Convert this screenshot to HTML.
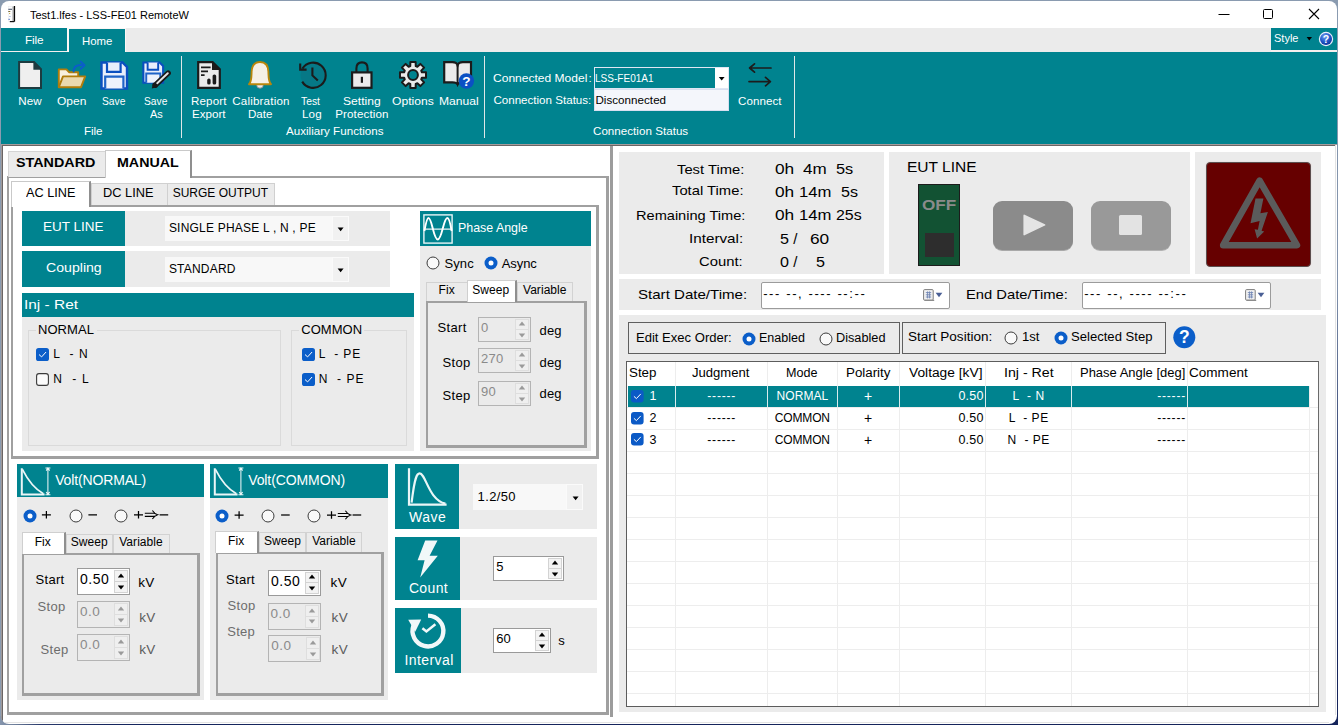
<!DOCTYPE html>
<html><head><meta charset="utf-8"><title>LSS-FE01 RemoteW</title><style>
html,body{margin:0;padding:0}
body{width:1338px;height:725px;position:relative;overflow:hidden;font-family:"Liberation Sans",sans-serif;font-size:12px;
background:linear-gradient(90deg,#7d8fa6 0,#6e8098 12%,#24356b 30%,#14245c 100%)}
.a{position:absolute;box-sizing:border-box}
.t{position:absolute;white-space:pre;line-height:1;font-family:"Liberation Sans",sans-serif}
#win{position:absolute;left:1px;top:1px;width:1336px;height:722px;background:#fff;border-radius:8px;overflow:hidden}
</style></head>
<body>
<div class="a" style="left:0;top:0;width:1338px;height:725px;background:#8a9bb0"></div>
<div class="a" style="left:0;top:716px;width:1338px;height:9px;background:linear-gradient(90deg,#8696ad 0,#6b7c98 1.2%,#2a3a6c 3%,#16265e 8%,#14235a 100%)"></div>
<div class="a" style="left:1330px;top:0;width:8px;height:725px;background:linear-gradient(180deg,#8a9bb0 0,#7f90aa 40%,#1c2c63 70%,#14235a 100%)"></div>
<div class="a" style="left:1px;top:1px;width:1336px;height:722.5px;border-radius:8px;background:#fff;overflow:hidden"><div class="a" style="left:-1px;top:-1px;width:1338px;height:725px">
<svg class="a" style="left:8px;top:6px;" width="8" height="17" viewBox="0 0 8 17"><rect x="0.2" y="0.3" width="4.4" height="15.4" fill="#fdfdfd" stroke="#e4e6ea" stroke-width="0.5"/><rect x="4.3" y="0.5" width="1.6" height="15" fill="#b9b9b9"/><rect x="5.8" y="0" width="1.3" height="15.7" fill="#050505"/><rect x="1.8" y="15" width="4.4" height="1.2" fill="#111"/><rect x="0.3" y="2.8" width="3.7" height="0.9" fill="#2b3a55"/><rect x="0.3" y="5" width="2" height="0.9" fill="#6b5a20"/><rect x="1" y="7" width="1.2" height="0.9" fill="#c9a93a"/><rect x="1" y="10" width="1.8" height="0.9" fill="#b5c3e4"/><rect x="0.3" y="12.8" width="1.7" height="1" fill="#5f7fc8"/></svg>
<div class="t" style="top:9.48px;font-size:11.6px;color:#000;left:30.43px;transform:scaleX(0.9486);transform-origin:0 0;">Test1.lfes - LSS-FE01 RemoteW</div>
<svg class="a" style="left:1212px;top:4px;" width="120" height="22" viewBox="0 0 120 22"><path d="M6.5 10.5H17.5" stroke="#000" stroke-width="1"/><rect x="51.5" y="5.5" width="9" height="9" rx="1" fill="none" stroke="#000" stroke-width="1"/><path d="M97 5L107 15M107 5L97 15" stroke="#000" stroke-width="1.1"/></svg>
<div class="a" style="left:1px;top:28px;width:1336px;height:24px;background:#ebebeb;"></div>
<div class="a" style="left:1px;top:28px;width:66px;height:23.2px;background:#00838f;"></div>
<div class="a" style="left:1px;top:51.2px;width:68px;height:1.0px;background:#f4efef;"></div>
<div class="a" style="left:67px;top:28px;width:59px;height:24.2px;background:#fbf7f5;"></div>
<div class="a" style="left:69px;top:29.2px;width:56px;height:23.0px;background:#00838f;"></div>
<div class="t" style="top:35.01px;font-size:11.8px;color:#fff;letter-spacing:-0.17px;left:25.0px;">File</div>
<div class="t" style="top:36.01px;font-size:11.8px;color:#fff;left:81.92px;transform:scaleX(0.9660);transform-origin:0 0;">Home</div>
<div class="a" style="left:1271px;top:28px;width:66px;height:21.9px;background:#00838f;"></div>
<div class="a" style="left:1271px;top:49.9px;width:66px;height:2.1px;background:#f6efee;"></div>
<div class="t" style="top:33.41px;font-size:11.8px;color:#fff;left:1273.94px;transform:scaleX(0.9340);transform-origin:0 0;">Style</div>
<svg class="a" style="left:1306px;top:36px;" width="7" height="6" viewBox="0 0 7 6"><path d="M0.6 1H6L3.3 4.6Z" fill="#000"/></svg>
<svg class="a" style="left:1318px;top:31px;" width="16" height="16" viewBox="0 0 16 16"><defs><radialGradient id="hg" cx="0.4" cy="0.3" r="0.8"><stop offset="0" stop-color="#6d9cf0"/><stop offset="0.55" stop-color="#1f55c8"/><stop offset="1" stop-color="#0a2a8a"/></radialGradient></defs><circle cx="8" cy="8" r="7.2" fill="#e8eefc"/><circle cx="8" cy="8" r="6" fill="url(#hg)"/><text x="8" y="12" text-anchor="middle" font-family="Liberation Sans" font-weight="700" font-size="10.5" fill="#fff">?</text></svg>
<div class="a" style="left:1px;top:52px;width:1336px;height:92px;background:#00838f;"></div>
<div class="a" style="left:1px;top:144px;width:1336px;height:1px;background:#a59c9c;"></div>
<div class="a" style="left:2px;top:145px;width:1334px;height:1px;background:#6a6565;"></div>
<div class="a" style="left:181.2px;top:56.2px;width:1.0px;height:81.6px;background:#dfe7e8;"></div>
<div class="a" style="left:484.2px;top:56.2px;width:1.0px;height:81.6px;background:#dfe7e8;"></div>
<div class="a" style="left:794.2px;top:56.2px;width:1.0px;height:81.6px;background:#dfe7e8;"></div>
<div class="t" style="top:95.18px;font-size:11.6px;color:#fff;letter-spacing:0.1px;left:18.2px;">New</div>
<div class="t" style="top:95.18px;font-size:11.6px;color:#fff;left:57.18px;transform:scaleX(1.0362);transform-origin:0 0;">Open</div>
<div class="t" style="top:95.18px;font-size:11.6px;color:#fff;left:102.07px;transform:scaleX(0.8851);transform-origin:0 0;">Save</div>
<div class="t" style="top:95.18px;font-size:11.6px;color:#fff;left:144.07px;transform:scaleX(0.8851);transform-origin:0 0;">Save</div>
<div class="t" style="top:107.98px;font-size:11.6px;color:#fff;left:149.63px;transform:scaleX(0.9455);transform-origin:0 0;">As</div>
<div class="t" style="top:125.38px;font-size:11.6px;color:#fff;letter-spacing:-0.129px;left:84.1px;">File</div>
<div class="t" style="top:95.18px;font-size:11.6px;color:#fff;letter-spacing:0.098px;left:191.1px;">Report</div>
<div class="t" style="top:107.98px;font-size:11.6px;color:#fff;letter-spacing:-0.005px;left:192.1px;">Export</div>
<div class="t" style="top:95.18px;font-size:11.6px;color:#fff;letter-spacing:0.186px;left:232.2px;">Calibration</div>
<div class="t" style="top:107.98px;font-size:11.6px;color:#fff;letter-spacing:-0.033px;left:248.0px;">Date</div>
<div class="t" style="top:95.18px;font-size:11.6px;color:#fff;left:301.46px;transform:scaleX(0.8917);transform-origin:0 0;">Test</div>
<div class="t" style="top:107.98px;font-size:11.6px;color:#fff;letter-spacing:0.076px;left:302.1px;">Log</div>
<div class="t" style="top:95.18px;font-size:11.6px;color:#fff;left:342.77px;transform:scaleX(1.0440);transform-origin:0 0;">Setting</div>
<div class="t" style="top:107.98px;font-size:11.6px;color:#fff;letter-spacing:0.131px;left:335.2px;">Protection</div>
<div class="t" style="top:95.18px;font-size:11.6px;color:#fff;left:392.07px;transform:scaleX(1.0457);transform-origin:0 0;">Options</div>
<div class="t" style="top:95.18px;font-size:11.6px;color:#fff;left:438.97px;transform:scaleX(1.0437);transform-origin:0 0;">Manual</div>
<div class="t" style="top:125.38px;font-size:11.6px;color:#fff;letter-spacing:0.009px;left:286.0px;">Auxiliary Functions</div>
<div class="t" style="top:72.38px;font-size:11.6px;color:#fff;left:493.38px;transform:scaleX(1.0384);transform-origin:0 0;">Connected Model</div>
<div class="t" style="top:94.18px;font-size:11.6px;color:#fff;letter-spacing:-0.003px;left:493.4px;">Connection Status:</div>
<div class="t" style="top:125.38px;font-size:11.6px;color:#fff;letter-spacing:0.026px;left:593.0px;">Connection Status</div>
<div class="t" style="top:95.08px;font-size:11.6px;color:#fff;letter-spacing:0.067px;left:738.0px;">Connect</div>
<div class="t" style="top:72.38px;font-size:11.6px;color:#fff;left:588.6px;">:</div>
<div class="a" style="left:593.5px;top:66.8px;width:135.5px;height:22.6px;background:#dfe6f3;"></div>
<div class="a" style="left:595px;top:68.2px;width:120px;height:19.8px;background:#00838f;"></div>
<div class="a" style="left:715px;top:68.2px;width:12.6px;height:19.8px;background:#fff;"></div>
<svg class="a" style="left:717.5px;top:75.5px;" width="8" height="6" viewBox="0 0 8 6"><path d="M0.8 1H6.6L3.7 4.6Z" fill="#000"/></svg>
<div class="t" style="top:72.38px;font-size:11.6px;color:#fff;left:595.48px;transform:scaleX(0.8656);transform-origin:0 0;">LSS-FE01A1</div>
<div class="a" style="left:593.5px;top:89.4px;width:135.5px;height:21.4px;background:#d7dff0;"></div>
<div class="a" style="left:594.5px;top:90.4px;width:133.5px;height:19.4px;background:#f4f6fb;"></div>
<div class="t" style="top:94.18px;font-size:11.6px;color:#000;letter-spacing:0.039px;left:595.4px;">Disconnected</div>
<svg class="a" style="left:746px;top:62px;" width="28" height="26" viewBox="0 0 28 26"><path d="M25 6H4M8.5 1.8L3.6 6L8.5 10.2" fill="none" stroke="#1c1c1c" stroke-width="1.7" stroke-linecap="round" stroke-linejoin="round"/><path d="M3 19.6H24M19.5 15.4L24.4 19.6L19.5 23.8" fill="none" stroke="#1c1c1c" stroke-width="1.7" stroke-linecap="round" stroke-linejoin="round"/></svg>
<svg class="a" style="left:17px;top:60px;" width="26" height="30" viewBox="0 0 26 30"><path d="M2.1 2.1H17L24 9.2V27.9H2.1Z" fill="#efefef" stroke="#1d3b40" stroke-width="2" stroke-linejoin="miter"/><path d="M16.4 1.1L25 9.8H16.4Z" fill="#1d3b40"/></svg>
<svg class="a" style="left:56px;top:60px;" width="32" height="30" viewBox="0 0 32 30"><path d="M2.8 27V9.4H10.4L13 12.2H22.2V16" fill="#f7f0dd" stroke="#b07d0c" stroke-width="1.9" stroke-linejoin="round"/><path d="M2.8 27.2L7 16.4H29.2L25 27.2Z" fill="#ead9ae" stroke="#b07d0c" stroke-width="1.9" stroke-linejoin="round"/><path d="M17.6 11.6C17.6 6.4 21 4.6 27.6 5" fill="none" stroke="#0b5ec9" stroke-width="2" stroke-linecap="round"/><path d="M24.6 1.6L28.6 5.2L24.8 8.8" fill="none" stroke="#0b5ec9" stroke-width="2" stroke-linecap="round" stroke-linejoin="round"/></svg>
<svg class="a" style="left:99.5px;top:60.6px;" width="29" height="29" viewBox="0 0 29 29"><path d="M1.5 1.5H22.5L27 6V27.5H1.5Z" fill="#e9eefb" stroke="#0b4fc0" stroke-width="2.4" stroke-linejoin="miter"/><path d="M7 1.5V10.8H20.6V1.5" fill="#e9eefb" stroke="#0b4fc0" stroke-width="2.1999999999999997"/><path d="M5.2 27.5V15.6H23.4V27.5" fill="#eef2fc" stroke="#1f63c8" stroke-width="2.1999999999999997"/></svg>
<svg class="a" style="left:141.2px;top:60.2px;" width="32" height="31" viewBox="0 0 32 31"><g transform="translate(1.2 1.4) scale(0.775)"><path d="M1.5 1.5H22.5L27 6V27.5H1.5Z" fill="#e9eefb" stroke="#0b4fc0" stroke-width="2.7" stroke-linejoin="miter"/><path d="M7 1.5V10.8H20.6V1.5" fill="#e9eefb" stroke="#0b4fc0" stroke-width="2.5"/><path d="M5.2 27.5V15.6H23.4V27.5" fill="#eef2fc" stroke="#1f63c8" stroke-width="2.5"/></g><path d="M14.2 25.2L27.2 13" stroke="#1a1a1a" stroke-width="5.4" stroke-linecap="round"/><path d="M10.8 28.6L12 22.6L17 27Z" fill="#1a1a1a"/><path d="M16.2 23.2L26.8 13.2" stroke="#e2e2e2" stroke-width="1.9" stroke-linecap="round"/></svg>
<svg class="a" style="left:196px;top:60px;" width="26" height="30" viewBox="0 0 26 30"><path d="M2.2 2.2H16.6L23.8 9.2V27.8H2.2Z" fill="#ebebeb" stroke="#1b1b1b" stroke-width="2.2" stroke-linejoin="miter"/><path d="M16 1.1L24.9 10H16Z" fill="#1b1b1b"/><path d="M5 7.4H14.6M5 11.4H12M5 15.2H8.6" stroke="#1b1b1b" stroke-width="1.7"/><rect x="11.2" y="18.4" width="3.4" height="6.2" rx="1.6" fill="#1b1b1b"/><rect x="16.6" y="14.4" width="3.6" height="10.2" rx="1.7" fill="#1b1b1b"/></svg>
<svg class="a" style="left:247px;top:60px;" width="26" height="30" viewBox="0 0 26 30"><ellipse cx="13" cy="25.6" rx="3.2" ry="2.6" fill="#e9e9e9" stroke="#8a8a8a" stroke-width="0.9"/><path d="M2 24.2C4.6 21.6 4.4 18 4.6 11.8C4.8 5.4 8 2 13 2S21.2 5.4 21.4 11.8C21.6 18 21.4 21.6 24 24.2Z" fill="#f5f0e6" stroke="#b8860b" stroke-width="1.9" stroke-linejoin="round"/></svg>
<svg class="a" style="left:297.5px;top:60px;" width="30" height="30" viewBox="0 0 30 30"><circle cx="15.2" cy="15" r="12.6" fill="#067886"/><path d="M4.4 8.6A12.6 12.6 0 1 1 4.2 21.6" fill="none" stroke="#1b1b1b" stroke-width="2.1"/><path d="M2.2 3.4V9.6H8.6" fill="none" stroke="#1b1b1b" stroke-width="2.1"/><path d="M14.4 7.4V15.4L19.8 20.6" fill="none" stroke="#1b1b1b" stroke-width="2.1"/></svg>
<svg class="a" style="left:350px;top:60px;" width="24" height="30" viewBox="0 0 24 30"><path d="M6.4 12.4V8.4C6.4 4.4 8.6 2.4 12 2.4S17.6 4.4 17.6 8.4V12.4" fill="none" stroke="#1b1b1b" stroke-width="2.1"/><rect x="2.1" y="12.4" width="19.4" height="15.4" fill="#ebebeb" stroke="#1b1b1b" stroke-width="2.2"/><rect x="10.8" y="16.8" width="2.2" height="6" fill="#1b1b1b"/></svg>
<svg class="a" style="left:398px;top:60px;" width="30" height="30" viewBox="0 0 30 30"><path d="M12.25 6.12L12.36 1.97L17.64 1.97L17.75 6.12L19.34 6.77L22.35 3.91L26.09 7.65L23.23 10.66L23.88 12.25L28.03 12.36L28.03 17.64L23.88 17.75L23.23 19.34L26.09 22.35L22.35 26.09L19.34 23.23L17.75 23.88L17.64 28.03L12.36 28.03L12.25 23.88L10.66 23.23L7.65 26.09L3.91 22.35L6.77 19.34L6.12 17.75L1.97 17.64L1.97 12.36L6.12 12.25L6.77 10.66L3.91 7.65L7.65 3.91L10.66 6.77Z" fill="#ebebeb" stroke="#1b1b1b" stroke-width="2" stroke-linejoin="round"/><circle cx="15" cy="15" r="4.9" fill="#00838f" stroke="#1b1b1b" stroke-width="2"/></svg>
<svg class="a" style="left:442px;top:60px;" width="34" height="30" viewBox="0 0 34 30"><path d="M2.2 2.2H10.4C13 2.2 15 3.4 15.6 5.4C16.2 3.4 18.2 2.2 20.8 2.2H29V22.4H20.8C18.2 22.4 16.2 23 15.6 24.4C15 23 13 22.4 10.4 22.4H2.2Z" fill="#ebebeb" stroke="#1b1b1b" stroke-width="2.2" stroke-linejoin="miter"/><path d="M15.6 5V24.4" stroke="#1b1b1b" stroke-width="2"/><circle cx="24.4" cy="21" r="7.7" fill="#0b50c4"/><text x="24.4" y="26" text-anchor="middle" font-family="Liberation Sans" font-weight="700" font-size="13.6" fill="#fff">?</text></svg>
<div class="a" style="left:1px;top:145px;width:2px;height:578px;background:#6a6565;"></div>
<div class="a" style="left:1px;top:145px;width:1px;height:578px;background:#a09a9a;"></div>
<div class="a" style="left:610.2px;top:146px;width:2.8px;height:570.5px;background:#9c9c9c;"></div>
<div class="a" style="left:7.2px;top:176.2px;width:601.7px;height:538.7px;background:#fff;border:2px solid #a0a0a0;border-right-width:3px;border-bottom-width:3px;"></div>
<div class="a" style="left:7.5px;top:151px;width:98.5px;height:26px;background:#ebebeb;border:1px solid #d4d4d4;border-bottom:none;"></div>
<div class="a" style="left:105px;top:149.8px;width:87.2px;height:28.4px;background:#fff;border:1px solid #c9c9c9;border-bottom:none;border-right:2px solid #8f8f8f;"></div>
<div class="t" style="top:156.2px;font-size:13px;color:#000;font-weight:700;left:16.34px;transform:scaleX(1.1033);transform-origin:0 0;">STANDARD</div>
<div class="t" style="top:156.2px;font-size:13px;color:#000;font-weight:700;left:116.84px;transform:scaleX(1.0956);transform-origin:0 0;">MANUAL</div>
<div class="a" style="left:11px;top:205.1px;width:588px;height:253.7px;background:#fff;border:2px solid #a0a0a0;border-right-width:3px;border-bottom-width:3px;"></div>
<div class="a" style="left:90.5px;top:183px;width:77.5px;height:22.4px;background:#ebebeb;border:1px solid #d0d0d0;border-bottom:none;"></div>
<div class="a" style="left:167.2px;top:183px;width:108.2px;height:22.4px;background:#ebebeb;border:1px solid #d0d0d0;border-bottom:none;"></div>
<div class="a" style="left:11px;top:180.8px;width:80px;height:26.2px;background:#fff;border:1px solid #c9c9c9;border-bottom:none;border-right:2px solid #8f8f8f;"></div>
<div class="t" style="top:187.14px;font-size:12px;color:#000;left:25.61px;transform:scaleX(1.0593);transform-origin:0 0;">AC LINE</div>
<div class="t" style="top:187.14px;font-size:12px;color:#000;left:102.61px;transform:scaleX(1.0657);transform-origin:0 0;">DC LINE</div>
<div class="t" style="top:187.14px;font-size:12px;color:#000;letter-spacing:0.01px;left:172.65px;">SURGE OUTPUT</div>
<div class="a" style="left:22px;top:210.5px;width:368px;height:35.5px;background:#ebebeb;"></div>
<div class="a" style="left:22px;top:210.5px;width:103px;height:35.5px;background:#00838f;"></div>
<div class="t" style="top:220.2px;font-size:13px;color:#fff;left:43.13px;transform:scaleX(1.0374);transform-origin:0 0;">EUT LINE</div>
<div class="a" style="left:165px;top:216px;width:184px;height:24.5px;background:#f8f8f8;"></div>
<div class="a" style="left:332px;top:216px;width:17px;height:24.5px;background:#f1f1f1;border:1px solid #fafafa;"></div>
<svg class="a" style="left:337px;top:226.75px;" width="8" height="5" viewBox="0 0 8 5"><path d="M0.6 0.6H6.6L3.6 4.2Z" fill="#000"/></svg>
<div class="t" style="top:221.84px;font-size:12px;color:#000;letter-spacing:0.204px;left:168.9px;">SINGLE PHASE L , N , PE</div>
<div class="a" style="left:22px;top:251px;width:368px;height:36px;background:#ebebeb;"></div>
<div class="a" style="left:22px;top:251px;width:103px;height:36px;background:#00838f;"></div>
<div class="t" style="top:261.0px;font-size:13px;color:#fff;left:45.6px;transform:scaleX(1.0858);transform-origin:0 0;">Coupling</div>
<div class="a" style="left:165px;top:256.8px;width:184px;height:25.0px;background:#f8f8f8;"></div>
<div class="a" style="left:332px;top:256.8px;width:17px;height:25.0px;background:#f1f1f1;border:1px solid #fafafa;"></div>
<svg class="a" style="left:337px;top:267.8px;" width="8" height="5" viewBox="0 0 8 5"><path d="M0.6 0.6H6.6L3.6 4.2Z" fill="#000"/></svg>
<div class="t" style="top:262.84px;font-size:12px;color:#000;letter-spacing:0.209px;left:168.9px;">STANDARD</div>
<div class="a" style="left:22px;top:293px;width:392px;height:157.8px;background:#ebebeb;"></div>
<div class="a" style="left:22px;top:293px;width:392px;height:24.2px;background:#00838f;"></div>
<div class="t" style="top:297.5px;font-size:13px;color:#fff;left:23.89px;transform:scaleX(1.1865);transform-origin:0 0;">Inj - Ret</div>
<div class="a" style="left:28px;top:330.2px;width:253.2px;height:115.4px;border:1px solid #dadada;"></div>
<div class="a" style="left:36px;top:328.2px;width:61px;height:5.0px;background:#ebebeb;"></div>
<div class="t" style="top:322.8px;font-size:13px;color:#000;letter-spacing:0.05px;left:38px;">NORMAL</div>
<div class="a" style="left:290.8px;top:330.2px;width:116.4px;height:115.4px;border:1px solid #dadada;"></div>
<div class="a" style="left:299.2px;top:328.2px;width:65.0px;height:5.0px;background:#ebebeb;"></div>
<div class="t" style="top:322.8px;font-size:13px;color:#000;letter-spacing:0.05px;left:301.2px;">COMMON</div>
<svg class="a" style="left:36.2px;top:348.2px;" width="13" height="13" viewBox="0 0 13 13"><rect x="0" y="0" width="13" height="13" rx="2.6" fill="#0b5ec9"/><path d="M3.3 6.8L5.6 8.9L9.8 4.3" fill="none" stroke="#fff" stroke-width="1.0" stroke-linecap="round" stroke-linejoin="round"/></svg>
<div class="t" style="top:348.04px;font-size:12px;color:#000;letter-spacing:1.123px;left:53.15px;">L  - N</div>
<svg class="a" style="left:36.2px;top:373.2px;" width="13" height="13" viewBox="0 0 13 13"><rect x="0.6" y="0.6" width="11.8" height="11.8" rx="2.4" fill="#fbfbfb" stroke="#3a3a3a" stroke-width="1.1"/></svg>
<div class="t" style="top:373.04px;font-size:12px;color:#000;letter-spacing:1.222px;left:53.15px;">N  - L</div>
<svg class="a" style="left:302.3px;top:348.2px;" width="13" height="13" viewBox="0 0 13 13"><rect x="0" y="0" width="13" height="13" rx="2.6" fill="#0b5ec9"/><path d="M3.3 6.8L5.6 8.9L9.8 4.3" fill="none" stroke="#fff" stroke-width="1.0" stroke-linecap="round" stroke-linejoin="round"/></svg>
<div class="t" style="top:348.04px;font-size:12px;color:#000;letter-spacing:0.879px;left:318.65px;">L  - PE</div>
<svg class="a" style="left:302.3px;top:373.2px;" width="13" height="13" viewBox="0 0 13 13"><rect x="0" y="0" width="13" height="13" rx="2.6" fill="#0b5ec9"/><path d="M3.3 6.8L5.6 8.9L9.8 4.3" fill="none" stroke="#fff" stroke-width="1.0" stroke-linecap="round" stroke-linejoin="round"/></svg>
<div class="t" style="top:373.04px;font-size:12px;color:#000;letter-spacing:1.046px;left:318.65px;">N  - PE</div>
<div class="a" style="left:420px;top:211px;width:171px;height:239.8px;background:#ebebeb;"></div>
<div class="a" style="left:420px;top:211px;width:171px;height:35px;background:#00838f;"></div>
<svg class="a" style="left:423px;top:214px;" width="30" height="30" viewBox="0 0 30 30"><rect x="0.9" y="0.9" width="28.2" height="28.2" fill="none" stroke="#eaf6f7" stroke-width="1.4"/><path d="M0.9 15.2H29.1" stroke="#eaf6f7" stroke-width="1.2"/><path d="M1.4 17C3 8 4 4 5.5 4C9 4 10.5 25.5 14.8 25.5C19 25.5 20.5 4 24.3 4C26 4 27.2 8 28.6 17" fill="none" stroke="#fff" stroke-width="1.9"/></svg>
<div class="t" style="top:221.2px;font-size:13px;color:#fff;left:458.23px;transform:scaleX(0.9539);transform-origin:0 0;">Phase Angle</div>
<svg class="a" style="left:426px;top:256.2px;" width="14" height="14" viewBox="0 0 14 14"><circle cx="7" cy="7" r="6" fill="#f9f9f9" stroke="#3c3c3c" stroke-width="1"/></svg>
<div class="t" style="top:256.5px;font-size:13px;color:#000;letter-spacing:0.05px;left:444.6px;">Sync</div>
<svg class="a" style="left:483.6px;top:256.2px;" width="14" height="14" viewBox="0 0 14 14"><circle cx="7" cy="7" r="6.5" fill="#0b5ec9"/><circle cx="7" cy="7" r="2.5" fill="#fff"/></svg>
<div class="t" style="top:256.5px;font-size:13px;color:#000;letter-spacing:-0.1px;left:501.8px;">Async</div>
<div class="a" style="left:425.8px;top:300.6px;width:161.6px;height:147.0px;background:#ebebeb;border:2px solid #a0a0a0;border-right-width:3px;border-bottom-width:3px;"></div>
<div class="a" style="left:425.8px;top:282px;width:41.8px;height:19.0px;background:#ebebeb;border:1px solid #d2d2d2;border-bottom:none;"></div>
<div class="a" style="left:516.5px;top:282px;width:56.7px;height:19.0px;background:#ebebeb;border:1px solid #d2d2d2;border-bottom:none;"></div>
<div class="a" style="left:466.6px;top:280.2px;width:50.1px;height:22.0px;background:#fff;border:1px solid #cfcfcf;border-bottom:none;border-right:2px solid #8f8f8f;"></div>
<div class="t" style="top:284.14px;font-size:12px;color:#000;letter-spacing:0.05px;left:296.62px;width:300px;text-align:center;">Fix</div>
<div class="t" style="top:284.14px;font-size:12px;color:#000;letter-spacing:0.05px;left:340.77px;width:300px;text-align:center;">Sweep</div>
<div class="t" style="top:284.14px;font-size:12px;color:#000;letter-spacing:0.05px;left:394.77px;width:300px;text-align:center;">Variable</div>
<div class="t" style="top:321.0px;font-size:13px;color:#000;letter-spacing:0.35px;left:437.5px;">Start</div>
<div class="t" style="top:356.0px;font-size:13px;color:#000;letter-spacing:0.3px;left:442.5px;">Stop</div>
<div class="t" style="top:389.0px;font-size:13px;color:#000;letter-spacing:0.3px;left:442.5px;">Step</div>
<div class="a" style="left:478px;top:317px;width:53.2px;height:25px;background:#ebebeb;border:1px solid #b4b4b4;"></div>
<div class="a" style="left:515.2px;top:319px;width:14.0px;height:21px;background:#efefef;border:1px solid #dedede;"></div>
<div class="a" style="left:515.2px;top:329.0px;width:14.0px;height:1.0px;background:#dedede;"></div>
<svg class="a" style="left:518.2px;top:321.0px;" width="8" height="5" viewBox="0 0 8 5"><path d="M0.8 4.4L4 0.6L7.2 4.4Z" fill="#9a9a9a"/></svg>
<svg class="a" style="left:518.2px;top:332.7px;" width="8" height="5" viewBox="0 0 8 5"><path d="M0.8 0.6L4 4.4L7.2 0.6Z" fill="#9a9a9a"/></svg>
<div class="t" style="top:321.2px;font-size:13px;color:#8a8a8a;letter-spacing:0.3px;left:481px;">0</div>
<div class="a" style="left:478px;top:348.2px;width:53.2px;height:24.8px;background:#ebebeb;border:1px solid #b4b4b4;"></div>
<div class="a" style="left:515.2px;top:350.2px;width:14.0px;height:20.8px;background:#efefef;border:1px solid #dedede;"></div>
<div class="a" style="left:515.2px;top:360.1px;width:14.0px;height:1.0px;background:#dedede;"></div>
<svg class="a" style="left:518.2px;top:352.1px;" width="8" height="5" viewBox="0 0 8 5"><path d="M0.8 4.4L4 0.6L7.2 4.4Z" fill="#9a9a9a"/></svg>
<svg class="a" style="left:518.2px;top:363.8px;" width="8" height="5" viewBox="0 0 8 5"><path d="M0.8 0.6L4 4.4L7.2 0.6Z" fill="#9a9a9a"/></svg>
<div class="t" style="top:352.2px;font-size:13px;color:#8a8a8a;letter-spacing:0.3px;left:481px;">270</div>
<div class="a" style="left:478px;top:381.2px;width:53.2px;height:24.8px;background:#ebebeb;border:1px solid #b4b4b4;"></div>
<div class="a" style="left:515.2px;top:383.2px;width:14.0px;height:20.8px;background:#efefef;border:1px solid #dedede;"></div>
<div class="a" style="left:515.2px;top:393.1px;width:14.0px;height:1.0px;background:#dedede;"></div>
<svg class="a" style="left:518.2px;top:385.1px;" width="8" height="5" viewBox="0 0 8 5"><path d="M0.8 4.4L4 0.6L7.2 4.4Z" fill="#9a9a9a"/></svg>
<svg class="a" style="left:518.2px;top:396.8px;" width="8" height="5" viewBox="0 0 8 5"><path d="M0.8 0.6L4 4.4L7.2 0.6Z" fill="#9a9a9a"/></svg>
<div class="t" style="top:385.2px;font-size:13px;color:#8a8a8a;letter-spacing:0.3px;left:481px;">90</div>
<div class="t" style="top:324.0px;font-size:13px;color:#000;letter-spacing:0.1px;left:539.6px;">deg</div>
<div class="t" style="top:356.0px;font-size:13px;color:#000;letter-spacing:0.1px;left:539.6px;">deg</div>
<div class="t" style="top:387.0px;font-size:13px;color:#000;letter-spacing:0.1px;left:539.6px;">deg</div>
<div class="a" style="left:17px;top:464.2px;width:187px;height:236.0px;background:#ebebeb;"></div>
<div class="a" style="left:17px;top:464.2px;width:187px;height:32.8px;background:#00838f;"></div>
<svg class="a" style="left:19.5px;top:465.5px;" width="32" height="31" viewBox="0 0 32 31"><path d="M1.8 2.2V28.4H24.6" fill="none" stroke="#eaf6f7" stroke-width="2"/><path d="M2.4 3.4C8 14.5 14 22.5 23.4 27.8" fill="none" stroke="#eaf6f7" stroke-width="1.7"/><path d="M27.9 1.8V28.8M25.4 1.9H30.4M25.4 28.7H30.4M26.2 4.6L27.9 2L29.6 4.6M26.2 26L27.9 28.6L29.6 26" fill="none" stroke="#eaf6f7" stroke-width="1.05"/></svg>
<div class="t" style="top:472.55px;font-size:14px;color:#fff;letter-spacing:-0.148px;left:55.2px;">Volt(NORMAL)</div>
<svg class="a" style="left:22.5px;top:508.79999999999995px;" width="14" height="14" viewBox="0 0 14 14"><circle cx="7" cy="7" r="6.5" fill="#0b5ec9"/><circle cx="7" cy="7" r="2.5" fill="#fff"/></svg>
<svg class="a" style="left:68.5px;top:508.79999999999995px;" width="14" height="14" viewBox="0 0 14 14"><circle cx="7" cy="7" r="6" fill="#f9f9f9" stroke="#3c3c3c" stroke-width="1"/></svg>
<svg class="a" style="left:114.3px;top:508.79999999999995px;" width="14" height="14" viewBox="0 0 14 14"><circle cx="7" cy="7" r="6" fill="#f9f9f9" stroke="#3c3c3c" stroke-width="1"/></svg>
<svg class="a" style="left:0px;top:0px;pointer-events:none;" width="1338" height="725" viewBox="0 0 1338 725"><path d="M41.9 514.8H50.9M46.4 511.09999999999997V518.5" stroke="#000" stroke-width="1.25" fill="none"/><path d="M88.4 514.8H97.0" stroke="#000" stroke-width="1.25" fill="none"/><path d="M134.0 514.8H143.0M138.5 511.09999999999997V518.5" stroke="#000" stroke-width="1.25" fill="none"/><path d="M144.8 513.25H155.0M144.8 516.3499999999999H155.0" stroke="#000" stroke-width="1.05" fill="none"/><path d="M152.4 510.49999999999994C153.8 512.8 155.60000000000002 514.1999999999999 157.60000000000002 514.8C155.60000000000002 515.4 153.8 516.8 152.4 519.0999999999999" stroke="#000" stroke-width="1.05" fill="none"/><path d="M159.6 514.8H168.2" stroke="#000" stroke-width="1.25" fill="none"/></svg>
<div class="a" style="left:22px;top:552.5px;width:178.4px;height:143.9px;background:#ebebeb;border:2px solid #a0a0a0;border-right-width:3px;border-bottom-width:3px;"></div>
<div class="a" style="left:65.5px;top:534px;width:47.6px;height:18.9px;background:#ebebeb;border:1px solid #d2d2d2;border-bottom:none;"></div>
<div class="a" style="left:112.5px;top:534px;width:57.1px;height:18.9px;background:#ebebeb;border:1px solid #d2d2d2;border-bottom:none;"></div>
<div class="a" style="left:21.6px;top:532.2px;width:44.1px;height:21.9px;background:#fff;border:1px solid #cfcfcf;border-bottom:none;border-right:2px solid #8f8f8f;"></div>
<div class="t" style="top:536.14px;font-size:12px;color:#000;letter-spacing:0.05px;left:-107.22px;width:300px;text-align:center;">Fix</div>
<div class="t" style="top:536.14px;font-size:12px;color:#000;letter-spacing:0.05px;left:-60.77px;width:300px;text-align:center;">Sweep</div>
<div class="t" style="top:536.14px;font-size:12px;color:#000;letter-spacing:0.05px;left:-9.03px;width:300px;text-align:center;">Variable</div>
<div class="t" style="top:572.8px;font-size:13px;color:#000;letter-spacing:0.3px;left:35.5px;">Start</div>
<div class="t" style="top:600.0px;font-size:13px;color:#6d6d6d;letter-spacing:0.3px;left:37.5px;">Stop</div>
<div class="t" style="top:643.0px;font-size:13px;color:#6d6d6d;letter-spacing:0.3px;left:40.5px;">Step</div>
<div class="a" style="left:77px;top:568px;width:53px;height:27px;background:#fff;border:1px solid #9a9a9a;"></div>
<div class="a" style="left:114px;top:570px;width:14px;height:23px;background:#f3f3f3;border:1px solid #d3d3d3;"></div>
<div class="a" style="left:114px;top:581.0px;width:14px;height:1.0px;background:#d3d3d3;"></div>
<svg class="a" style="left:117px;top:573.0px;" width="8" height="5" viewBox="0 0 8 5"><path d="M0.8 4.4L4 0.6L7.2 4.4Z" fill="#000"/></svg>
<svg class="a" style="left:117px;top:584.7px;" width="8" height="5" viewBox="0 0 8 5"><path d="M0.8 0.6L4 4.4L7.2 0.6Z" fill="#000"/></svg>
<div class="t" style="top:571.75px;font-size:14px;color:#000;letter-spacing:0.5px;left:80px;">0.50</div>
<div class="a" style="left:77px;top:601.2px;width:53px;height:26.8px;background:#ebebeb;border:1px solid #b4b4b4;"></div>
<div class="a" style="left:114px;top:603.2px;width:14px;height:22.8px;background:#efefef;border:1px solid #dedede;"></div>
<div class="a" style="left:114px;top:614.1px;width:14px;height:1.0px;background:#dedede;"></div>
<svg class="a" style="left:117px;top:606.1px;" width="8" height="5" viewBox="0 0 8 5"><path d="M0.8 4.4L4 0.6L7.2 4.4Z" fill="#9a9a9a"/></svg>
<svg class="a" style="left:117px;top:617.8000000000001px;" width="8" height="5" viewBox="0 0 8 5"><path d="M0.8 0.6L4 4.4L7.2 0.6Z" fill="#9a9a9a"/></svg>
<div class="t" style="top:605.27px;font-size:13.5px;color:#8a8a8a;letter-spacing:0.5px;left:80px;">0.0</div>
<div class="a" style="left:77px;top:634.2px;width:53px;height:26.8px;background:#ebebeb;border:1px solid #b4b4b4;"></div>
<div class="a" style="left:114px;top:636.2px;width:14px;height:22.8px;background:#efefef;border:1px solid #dedede;"></div>
<div class="a" style="left:114px;top:647.1px;width:14px;height:1.0px;background:#dedede;"></div>
<svg class="a" style="left:117px;top:639.1px;" width="8" height="5" viewBox="0 0 8 5"><path d="M0.8 4.4L4 0.6L7.2 4.4Z" fill="#9a9a9a"/></svg>
<svg class="a" style="left:117px;top:650.8000000000001px;" width="8" height="5" viewBox="0 0 8 5"><path d="M0.8 0.6L4 4.4L7.2 0.6Z" fill="#9a9a9a"/></svg>
<div class="t" style="top:638.27px;font-size:13.5px;color:#8a8a8a;letter-spacing:0.5px;left:80px;">0.0</div>
<div class="t" style="top:576.07px;font-size:13.5px;color:#000;letter-spacing:0.4px;left:138.2px;">kV</div>
<div class="t" style="top:610.57px;font-size:13.5px;color:#5c5c5c;letter-spacing:0.4px;left:139.2px;">kV</div>
<div class="t" style="top:642.57px;font-size:13.5px;color:#5c5c5c;letter-spacing:0.4px;left:139.2px;">kV</div>
<div class="a" style="left:210px;top:464.2px;width:178px;height:236.0px;background:#ebebeb;"></div>
<div class="a" style="left:210px;top:464.2px;width:178px;height:33.5px;background:#00838f;"></div>
<svg class="a" style="left:212.5px;top:465.5px;" width="32" height="31" viewBox="0 0 32 31"><path d="M1.8 2.2V28.4H24.6" fill="none" stroke="#eaf6f7" stroke-width="2"/><path d="M2.4 3.4C8 14.5 14 22.5 23.4 27.8" fill="none" stroke="#eaf6f7" stroke-width="1.7"/><path d="M27.9 1.8V28.8M25.4 1.9H30.4M25.4 28.7H30.4M26.2 4.6L27.9 2L29.6 4.6M26.2 26L27.9 28.6L29.6 26" fill="none" stroke="#eaf6f7" stroke-width="1.05"/></svg>
<div class="t" style="top:472.55px;font-size:14px;color:#fff;letter-spacing:-0.096px;left:248.2px;">Volt(COMMON)</div>
<svg class="a" style="left:215.2px;top:509.0px;" width="14" height="14" viewBox="0 0 14 14"><circle cx="7" cy="7" r="6.5" fill="#0b5ec9"/><circle cx="7" cy="7" r="2.5" fill="#fff"/></svg>
<svg class="a" style="left:261.2px;top:509.0px;" width="14" height="14" viewBox="0 0 14 14"><circle cx="7" cy="7" r="6" fill="#f9f9f9" stroke="#3c3c3c" stroke-width="1"/></svg>
<svg class="a" style="left:307.3px;top:509.0px;" width="14" height="14" viewBox="0 0 14 14"><circle cx="7" cy="7" r="6" fill="#f9f9f9" stroke="#3c3c3c" stroke-width="1"/></svg>
<svg class="a" style="left:0px;top:0px;pointer-events:none;" width="1338" height="725" viewBox="0 0 1338 725"><path d="M234.6 515.0H243.6M239.1 511.3V518.7" stroke="#000" stroke-width="1.25" fill="none"/><path d="M281.09999999999997 515.0H289.7" stroke="#000" stroke-width="1.25" fill="none"/><path d="M327.0 515.0H336.0M331.5 511.3V518.7" stroke="#000" stroke-width="1.25" fill="none"/><path d="M337.8 513.45H348.0M337.8 516.55H348.0" stroke="#000" stroke-width="1.05" fill="none"/><path d="M345.40000000000003 510.7C346.8 513.0 348.6 514.4 350.6 515.0C348.6 515.6 346.8 517.0 345.40000000000003 519.3" stroke="#000" stroke-width="1.05" fill="none"/><path d="M352.6 515.0H361.20000000000005" stroke="#000" stroke-width="1.25" fill="none"/></svg>
<div class="a" style="left:215.5px;top:551.6px;width:168.5px;height:144.8px;background:#ebebeb;border:2px solid #a0a0a0;border-right-width:3px;border-bottom-width:3px;"></div>
<div class="a" style="left:258.8px;top:532.4px;width:47.4px;height:19.6px;background:#ebebeb;border:1px solid #d2d2d2;border-bottom:none;"></div>
<div class="a" style="left:305.6px;top:532.4px;width:56.8px;height:19.6px;background:#ebebeb;border:1px solid #d2d2d2;border-bottom:none;"></div>
<div class="a" style="left:215.1px;top:530.6px;width:43.9px;height:22.6px;background:#fff;border:1px solid #cfcfcf;border-bottom:none;border-right:2px solid #8f8f8f;"></div>
<div class="t" style="top:534.54px;font-size:12px;color:#000;letter-spacing:0.05px;left:86.18px;width:300px;text-align:center;">Fix</div>
<div class="t" style="top:534.54px;font-size:12px;color:#000;letter-spacing:0.05px;left:132.43px;width:300px;text-align:center;">Sweep</div>
<div class="t" style="top:534.54px;font-size:12px;color:#000;letter-spacing:0.05px;left:183.93px;width:300px;text-align:center;">Variable</div>
<div class="t" style="top:572.8px;font-size:13px;color:#000;letter-spacing:0.3px;left:226px;">Start</div>
<div class="t" style="top:599.0px;font-size:13px;color:#6d6d6d;letter-spacing:0.3px;left:227.5px;">Stop</div>
<div class="t" style="top:625.0px;font-size:13px;color:#6d6d6d;letter-spacing:0.3px;left:227.2px;">Step</div>
<div class="a" style="left:268px;top:570px;width:53.2px;height:25.8px;background:#fff;border:1px solid #9a9a9a;"></div>
<div class="a" style="left:305.2px;top:572px;width:14.0px;height:21.8px;background:#f3f3f3;border:1px solid #d3d3d3;"></div>
<div class="a" style="left:305.2px;top:582.4px;width:14.0px;height:1.0px;background:#d3d3d3;"></div>
<svg class="a" style="left:308.2px;top:574.4px;" width="8" height="5" viewBox="0 0 8 5"><path d="M0.8 4.4L4 0.6L7.2 4.4Z" fill="#000"/></svg>
<svg class="a" style="left:308.2px;top:586.1px;" width="8" height="5" viewBox="0 0 8 5"><path d="M0.8 0.6L4 4.4L7.2 0.6Z" fill="#000"/></svg>
<div class="t" style="top:573.75px;font-size:14px;color:#000;letter-spacing:0.5px;left:271px;">0.50</div>
<div class="a" style="left:267.5px;top:603px;width:53.1px;height:26.5px;background:#ebebeb;border:1px solid #b4b4b4;"></div>
<div class="a" style="left:304.6px;top:605px;width:14.0px;height:22.5px;background:#efefef;border:1px solid #dedede;"></div>
<div class="a" style="left:304.6px;top:615.75px;width:14.0px;height:1.0px;background:#dedede;"></div>
<svg class="a" style="left:307.6px;top:607.75px;" width="8" height="5" viewBox="0 0 8 5"><path d="M0.8 4.4L4 0.6L7.2 4.4Z" fill="#9a9a9a"/></svg>
<svg class="a" style="left:307.6px;top:619.45px;" width="8" height="5" viewBox="0 0 8 5"><path d="M0.8 0.6L4 4.4L7.2 0.6Z" fill="#9a9a9a"/></svg>
<div class="t" style="top:607.07px;font-size:13.5px;color:#8a8a8a;letter-spacing:0.5px;left:270.5px;">0.0</div>
<div class="a" style="left:268.2px;top:635px;width:53.3px;height:27px;background:#ebebeb;border:1px solid #b4b4b4;"></div>
<div class="a" style="left:305.5px;top:637px;width:14.0px;height:23px;background:#efefef;border:1px solid #dedede;"></div>
<div class="a" style="left:305.5px;top:648.0px;width:14.0px;height:1.0px;background:#dedede;"></div>
<svg class="a" style="left:308.5px;top:640.0px;" width="8" height="5" viewBox="0 0 8 5"><path d="M0.8 4.4L4 0.6L7.2 4.4Z" fill="#9a9a9a"/></svg>
<svg class="a" style="left:308.5px;top:651.7px;" width="8" height="5" viewBox="0 0 8 5"><path d="M0.8 0.6L4 4.4L7.2 0.6Z" fill="#9a9a9a"/></svg>
<div class="t" style="top:639.07px;font-size:13.5px;color:#8a8a8a;letter-spacing:0.5px;left:271.2px;">0.0</div>
<div class="t" style="top:576.07px;font-size:13.5px;color:#000;letter-spacing:0.4px;left:330.6px;">kV</div>
<div class="t" style="top:610.57px;font-size:13.5px;color:#5c5c5c;letter-spacing:0.4px;left:331.6px;">kV</div>
<div class="t" style="top:642.57px;font-size:13.5px;color:#5c5c5c;letter-spacing:0.4px;left:331.6px;">kV</div>
<div class="a" style="left:395.2px;top:464.2px;width:202.2px;height:64.8px;background:#ebebeb;"></div>
<div class="a" style="left:395.2px;top:464.2px;width:64.2px;height:64.8px;background:#00838f;"></div>
<div class="a" style="left:395.2px;top:537px;width:202.2px;height:63px;background:#ebebeb;"></div>
<div class="a" style="left:395.2px;top:537px;width:65.2px;height:63px;background:#00838f;"></div>
<div class="a" style="left:395.2px;top:608.2px;width:202.2px;height:64.8px;background:#ebebeb;"></div>
<div class="a" style="left:395.2px;top:608.2px;width:66.2px;height:64.8px;background:#00838f;"></div>
<div class="t" style="top:509.95px;font-size:14px;color:#fff;letter-spacing:0.45px;left:277.62px;width:300px;text-align:center;">Wave</div>
<div class="t" style="top:581.15px;font-size:14px;color:#fff;letter-spacing:0.35px;left:278.48px;width:300px;text-align:center;">Count</div>
<div class="t" style="top:653.35px;font-size:14px;color:#fff;letter-spacing:0.4px;left:279.1px;width:300px;text-align:center;">Interval</div>
<svg class="a" style="left:405px;top:467px;" width="44" height="42" viewBox="0 0 44 42"><path d="M4.0 1.2V37.6H41.6" fill="none" stroke="#eaf6f7" stroke-width="2.2" stroke-linejoin="miter"/><path d="M6.6 35.6C9.6 11 11.6 6.4 14.6 6.4C20.8 6.4 23.6 33 40.4 36.6" fill="none" stroke="#eaf6f7" stroke-width="2.2"/></svg>
<svg class="a" style="left:414px;top:540px;" width="28" height="40" viewBox="0 0 28 40"><path d="M11.2 0.5H23.5L15.6 15.8H23.8L6.2 37.5L10.6 20.2H3.6Z" fill="#f1f8f9"/></svg>
<svg class="a" style="left:407px;top:611px;" width="42" height="44" viewBox="0 0 42 44"><path d="M21 4.6A15.4 15.4 0 1 1 6.6 14.4" fill="none" stroke="#f1f8f9" stroke-width="4.4"/><path d="M1.2 8.8L14.2 8.6L8.2 20.8Z" fill="#f1f8f9"/><path d="M15.4 17.2L19.4 20.4L28.4 13.2" fill="none" stroke="#f1f8f9" stroke-width="2.5"/></svg>
<div class="a" style="left:473.2px;top:484.2px;width:110.2px;height:25.4px;background:#f8f8f8;"></div>
<div class="a" style="left:566.2px;top:484.2px;width:17.2px;height:25.4px;background:#f1f1f1;border:1px solid #fafafa;"></div>
<svg class="a" style="left:571.5px;top:495.5px;" width="8" height="5" viewBox="0 0 8 5"><path d="M0.6 0.6H6.6L3.6 4.2Z" fill="#000"/></svg>
<div class="t" style="top:490.0px;font-size:13px;color:#000;letter-spacing:0.35px;left:477.6px;">1.2/50</div>
<div class="a" style="left:493.2px;top:556.2px;width:71.2px;height:24.6px;background:#fff;border:1px solid #9a9a9a;"></div>
<div class="a" style="left:548.4px;top:558.2px;width:14.0px;height:20.6px;background:#f3f3f3;border:1px solid #d3d3d3;"></div>
<div class="a" style="left:548.4px;top:568.0px;width:14.0px;height:1.0px;background:#d3d3d3;"></div>
<svg class="a" style="left:551.4px;top:560.0px;" width="8" height="5" viewBox="0 0 8 5"><path d="M0.8 4.4L4 0.6L7.2 4.4Z" fill="#000"/></svg>
<svg class="a" style="left:551.4px;top:571.7px;" width="8" height="5" viewBox="0 0 8 5"><path d="M0.8 0.6L4 4.4L7.2 0.6Z" fill="#000"/></svg>
<div class="t" style="top:559.9px;font-size:13px;color:#000;left:496.2px;">5</div>
<div class="a" style="left:493.2px;top:628.2px;width:58.2px;height:24.6px;background:#fff;border:1px solid #9a9a9a;"></div>
<div class="a" style="left:535.4px;top:630.2px;width:14.0px;height:20.6px;background:#f3f3f3;border:1px solid #d3d3d3;"></div>
<div class="a" style="left:535.4px;top:640.0px;width:14.0px;height:1.0px;background:#d3d3d3;"></div>
<svg class="a" style="left:538.4px;top:632.0px;" width="8" height="5" viewBox="0 0 8 5"><path d="M0.8 4.4L4 0.6L7.2 4.4Z" fill="#000"/></svg>
<svg class="a" style="left:538.4px;top:643.7px;" width="8" height="5" viewBox="0 0 8 5"><path d="M0.8 0.6L4 4.4L7.2 0.6Z" fill="#000"/></svg>
<div class="t" style="top:631.9px;font-size:13px;color:#000;letter-spacing:0.2px;left:496.2px;">60</div>
<div class="t" style="top:633.8px;font-size:13px;color:#000;left:558.2px;">s</div>
<div class="a" style="left:1335px;top:145.2px;width:1px;height:569.8px;background:#e3e3e3;"></div>
<div class="a" style="left:3px;top:721.7px;width:1326px;height:1.0px;background:#e4e4e4;"></div>
<div class="a" style="left:619.2px;top:152px;width:265.0px;height:121.8px;background:#ebebeb;"></div>
<div class="a" style="left:889.2px;top:152px;width:301.2px;height:121.8px;background:#ebebeb;"></div>
<div class="a" style="left:1195.2px;top:152px;width:126.2px;height:121.8px;background:#ebebeb;"></div>
<div class="a" style="left:619.2px;top:279.4px;width:702.2px;height:30.4px;background:#ebebeb;"></div>
<div class="a" style="left:619.2px;top:315px;width:707.0px;height:397px;background:#ebebeb;"></div>
<div class="t" style="top:162.8px;font-size:13px;color:#000;left:676.82px;transform:scaleX(1.1358);transform-origin:0 0;">Test Time:</div>
<div class="t" style="top:184.0px;font-size:13px;color:#000;left:671.82px;transform:scaleX(1.1373);transform-origin:0 0;">Total Time:</div>
<div class="t" style="top:209.0px;font-size:13px;color:#000;left:635.58px;transform:scaleX(1.1213);transform-origin:0 0;">Remaining Time:</div>
<div class="t" style="top:232.0px;font-size:13px;color:#000;left:688.8px;transform:scaleX(1.1721);transform-origin:0 0;">Interval:</div>
<div class="t" style="top:255.0px;font-size:13px;color:#000;left:699.32px;transform:scaleX(1.1411);transform-origin:0 0;">Count:</div>
<div class="t" style="top:161.3px;font-size:15px;color:#000;left:775.06px;transform:scaleX(1.1511);transform-origin:0 0;">0h</div>
<div class="t" style="top:161.3px;font-size:15px;color:#000;left:803.07px;transform:scaleX(1.1375);transform-origin:0 0;">4m</div>
<div class="t" style="top:161.3px;font-size:15px;color:#000;left:836.35px;transform:scaleX(1.0859);transform-origin:0 0;">5s</div>
<div class="t" style="top:184.3px;font-size:15px;color:#000;left:775.06px;transform:scaleX(1.1511);transform-origin:0 0;">0h</div>
<div class="t" style="top:184.3px;font-size:15px;color:#000;left:798.58px;transform:scaleX(1.1123);transform-origin:0 0;">14m</div>
<div class="t" style="top:184.3px;font-size:15px;color:#000;left:840.61px;transform:scaleX(1.0701);transform-origin:0 0;">5s</div>
<div class="t" style="top:207.3px;font-size:15px;color:#000;left:775.06px;transform:scaleX(1.1511);transform-origin:0 0;">0h</div>
<div class="t" style="top:207.3px;font-size:15px;color:#000;left:798.58px;transform:scaleX(1.1123);transform-origin:0 0;">14m</div>
<div class="t" style="top:207.3px;font-size:15px;color:#000;left:835.61px;transform:scaleX(1.0629);transform-origin:0 0;">25s</div>
<div class="t" style="top:231.1px;font-size:15px;color:#000;left:779.86px;transform:scaleX(1.0731);transform-origin:0 0;">5</div>
<div class="t" style="top:231.1px;font-size:15px;color:#000;letter-spacing:3.28px;left:793.15px;">/</div>
<div class="t" style="top:231.1px;font-size:15px;color:#000;left:810.06px;transform:scaleX(1.1511);transform-origin:0 0;">60</div>
<div class="t" style="top:254.3px;font-size:15px;color:#000;left:779.86px;transform:scaleX(1.0731);transform-origin:0 0;">0</div>
<div class="t" style="top:254.3px;font-size:15px;color:#000;letter-spacing:3.28px;left:793.15px;">/</div>
<div class="t" style="top:254.3px;font-size:15px;color:#000;left:816.11px;transform:scaleX(1.0731);transform-origin:0 0;">5</div>
<div class="t" style="top:159.3px;font-size:15px;color:#000;left:906.88px;transform:scaleX(1.0361);transform-origin:0 0;">EUT LINE</div>
<div class="a" style="left:918px;top:184.2px;width:42.2px;height:81.6px;background:#125233;border:1px solid #1c1c1c;"></div>
<div class="t" style="top:196.78px;font-size:15.5px;color:#8b8b8b;font-weight:700;left:921.94px;transform:scaleX(1.1065);transform-origin:0 0;">OFF</div>
<div class="a" style="left:924.6px;top:233.2px;width:29.2px;height:23.6px;background:#2d2d2d;"></div>
<div class="a" style="left:993.2px;top:200.8px;width:79.4px;height:49.2px;background:#8b8b8b;border-radius:9px;box-shadow:0 1px 0 #a9a9a9;"></div>
<svg class="a" style="left:1023px;top:214px;" width="23" height="22" viewBox="0 0 23 22"><path d="M1.2 1.4L21.6 10.9L1.2 20.6Z" fill="#e4e4e4" stroke="#e4e4e4" stroke-width="1.6" stroke-linejoin="round"/></svg>
<div class="a" style="left:1091.2px;top:200.8px;width:79.6px;height:49.2px;background:#999999;border-radius:9px;box-shadow:0 1px 0 #b2b2b2;"></div>
<div class="a" style="left:1118.6px;top:215px;width:23.6px;height:20px;background:#e3e3e3;border-radius:1.5px;"></div>
<div class="a" style="left:1205.4px;top:161.2px;width:106.2px;height:106.2px;background:#e9e4e4;border-radius:5px;"></div>
<div class="a" style="left:1206.2px;top:162px;width:104.8px;height:104.8px;background:#660000;border-radius:4px;border:1.6px solid #5b4e4e;"></div>
<svg class="a" style="left:1212px;top:168px;" width="96" height="92" viewBox="0 0 96 92"><path d="M47.6 12.7L84.9 77.2H11.2Z" fill="none" stroke="#5b5b5b" stroke-width="6.6" stroke-linejoin="round"/><path d="M43.5 30.4L51.4 30.4L48.4 45.3L55.9 44.1L49.6 62.8L52.2 63.5L45.1 70.6L42.6 61.2L45.9 61.8L47.6 52.9L38.5 55.2Z" fill="#5b5b5b"/></svg>
<div class="t" style="top:288.2px;font-size:13px;color:#000;left:637.55px;transform:scaleX(1.1592);transform-origin:0 0;">Start Date/Time:</div>
<div class="t" style="top:288.2px;font-size:13px;color:#000;left:965.57px;transform:scaleX(1.1345);transform-origin:0 0;">End Date/Time:</div>
<div class="a" style="left:761.2px;top:282.4px;width:188.4px;height:26.4px;background:#fff;border:1px solid #9b9b9b;border-radius:2px;"></div>
<div class="t" style="top:286.6px;font-size:13px;color:#000;letter-spacing:1.603px;left:763.2px;">--- --, ---- --:--</div>
<svg class="a" style="left:923.1px;top:288.4px;" width="22" height="14" viewBox="0 0 22 14"><rect x="0.6" y="1.6" width="9.6" height="10.6" rx="1" fill="#f2f2f2" stroke="#7c7c7c" stroke-width="1"/><rect x="1.6" y="11.8" width="9.6" height="1.2" fill="#8c8c8c"/><path d="M2.8 4.6H8.2M2.8 6.8H8.2M2.8 9H8.2M4.6 3.4V10.4M6.6 3.4V10.4" stroke="#7086b4" stroke-width="0.9"/><path d="M12.6 4.8H19.4L16 9.2Z" fill="#4a5f95"/></svg>
<div class="a" style="left:1082.2px;top:282.4px;width:189.0px;height:26.4px;background:#fff;border:1px solid #9b9b9b;border-radius:2px;"></div>
<div class="t" style="top:286.6px;font-size:13px;color:#000;letter-spacing:1.603px;left:1084.2px;">--- --, ---- --:--</div>
<svg class="a" style="left:1244.7px;top:288.4px;" width="22" height="14" viewBox="0 0 22 14"><rect x="0.6" y="1.6" width="9.6" height="10.6" rx="1" fill="#f2f2f2" stroke="#7c7c7c" stroke-width="1"/><rect x="1.6" y="11.8" width="9.6" height="1.2" fill="#8c8c8c"/><path d="M2.8 4.6H8.2M2.8 6.8H8.2M2.8 9H8.2M4.6 3.4V10.4M6.6 3.4V10.4" stroke="#7086b4" stroke-width="0.9"/><path d="M12.6 4.8H19.4L16 9.2Z" fill="#4a5f95"/></svg>
<div class="a" style="left:628px;top:322.4px;width:272px;height:31.6px;border:1px solid #5f5f5f;"></div>
<div class="a" style="left:902.4px;top:322.4px;width:264.0px;height:31.6px;border:1px solid #5f5f5f;"></div>
<div class="t" style="top:331.64px;font-size:12px;color:#000;left:635.6px;transform:scaleX(1.0871);transform-origin:0 0;">Edit Exec Order:</div>
<svg class="a" style="left:741.8px;top:331.6px;" width="14" height="14" viewBox="0 0 14 14"><circle cx="7" cy="7" r="6.5" fill="#0b5ec9"/><circle cx="7" cy="7" r="2.5" fill="#fff"/></svg>
<div class="t" style="top:331.64px;font-size:12px;color:#000;left:758.87px;transform:scaleX(1.0437);transform-origin:0 0;">Enabled</div>
<svg class="a" style="left:818.6px;top:331.6px;" width="14" height="14" viewBox="0 0 14 14"><circle cx="7" cy="7" r="6" fill="#f9f9f9" stroke="#3c3c3c" stroke-width="1"/></svg>
<div class="t" style="top:331.64px;font-size:12px;color:#000;left:836.11px;transform:scaleX(1.0593);transform-origin:0 0;">Disabled</div>
<div class="t" style="top:330.64px;font-size:12px;color:#000;left:907.57px;transform:scaleX(1.1272);transform-origin:0 0;">Start Position:</div>
<svg class="a" style="left:1004.4px;top:331.4px;" width="14" height="14" viewBox="0 0 14 14"><circle cx="7" cy="7" r="6" fill="#f9f9f9" stroke="#3c3c3c" stroke-width="1"/></svg>
<div class="t" style="top:331.44px;font-size:12px;color:#000;left:1022.35px;transform:scaleX(1.0901);transform-origin:0 0;">1st</div>
<svg class="a" style="left:1053.6px;top:331.4px;" width="14" height="14" viewBox="0 0 14 14"><circle cx="7" cy="7" r="6.5" fill="#0b5ec9"/><circle cx="7" cy="7" r="2.5" fill="#fff"/></svg>
<div class="t" style="top:331.44px;font-size:12px;color:#000;left:1071.1px;transform:scaleX(1.0902);transform-origin:0 0;">Selected Step</div>
<svg class="a" style="left:1173px;top:326px;" width="23" height="23" viewBox="0 0 23 23"><circle cx="11.3" cy="11.2" r="11" fill="#0b5ec9"/><text x="11.4" y="17.4" text-anchor="middle" font-family="Liberation Sans" font-weight="700" font-size="17.5" fill="#fff">?</text></svg>
<div class="a" style="left:626.4px;top:361px;width:692.8px;height:345.8px;background:#fff;border:1px solid #5c5c5c;border-right-color:#6a6a6a;"></div>
<div class="a" style="left:628.2px;top:386.2px;width:681.4px;height:21.2px;background:#00838f;"></div>
<div class="a" style="left:627.4px;top:407.4px;width:690.4px;height:1.0px;background:#ededed;"></div>
<div class="a" style="left:627.4px;top:429.3px;width:690.4px;height:1.0px;background:#ededed;"></div>
<div class="a" style="left:627.4px;top:451.3px;width:690.4px;height:1.0px;background:#ededed;"></div>
<div class="a" style="left:627.4px;top:473.3px;width:690.4px;height:1.0px;background:#ededed;"></div>
<div class="a" style="left:627.4px;top:495.2px;width:690.4px;height:1.0px;background:#ededed;"></div>
<div class="a" style="left:627.4px;top:517.2px;width:690.4px;height:1.0px;background:#ededed;"></div>
<div class="a" style="left:627.4px;top:539.2px;width:690.4px;height:1.0px;background:#ededed;"></div>
<div class="a" style="left:627.4px;top:561.2px;width:690.4px;height:1.0px;background:#ededed;"></div>
<div class="a" style="left:627.4px;top:583.1px;width:690.4px;height:1.0px;background:#ededed;"></div>
<div class="a" style="left:627.4px;top:605.1px;width:690.4px;height:1.0px;background:#ededed;"></div>
<div class="a" style="left:627.4px;top:627.1px;width:690.4px;height:1.0px;background:#ededed;"></div>
<div class="a" style="left:627.4px;top:649.0px;width:690.4px;height:1.0px;background:#ededed;"></div>
<div class="a" style="left:627.4px;top:671.0px;width:690.4px;height:1.0px;background:#ededed;"></div>
<div class="a" style="left:627.4px;top:693.0px;width:690.4px;height:1.0px;background:#ededed;"></div>
<div class="a" style="left:675px;top:362px;width:1px;height:343.8px;background:#ededed;"></div>
<div class="a" style="left:767px;top:362px;width:1px;height:343.8px;background:#ededed;"></div>
<div class="a" style="left:837px;top:362px;width:1px;height:343.8px;background:#ededed;"></div>
<div class="a" style="left:899px;top:362px;width:1px;height:343.8px;background:#ededed;"></div>
<div class="a" style="left:985px;top:362px;width:1px;height:343.8px;background:#ededed;"></div>
<div class="a" style="left:1071px;top:362px;width:1px;height:343.8px;background:#ededed;"></div>
<div class="a" style="left:1187.4px;top:362px;width:1.0px;height:343.8px;background:#ededed;"></div>
<div class="a" style="left:1309.4px;top:386.2px;width:1.0px;height:319.6px;background:#ededed;"></div>
<div class="a" style="left:675px;top:386.2px;width:1px;height:21.2px;background:#d9ecee;"></div>
<div class="a" style="left:767px;top:386.2px;width:1px;height:21.2px;background:#d9ecee;"></div>
<div class="a" style="left:837px;top:386.2px;width:1px;height:21.2px;background:#d9ecee;"></div>
<div class="a" style="left:899px;top:386.2px;width:1px;height:21.2px;background:#d9ecee;"></div>
<div class="a" style="left:985px;top:386.2px;width:1px;height:21.2px;background:#d9ecee;"></div>
<div class="a" style="left:1071px;top:386.2px;width:1px;height:21.2px;background:#d9ecee;"></div>
<div class="a" style="left:1187.4px;top:386.2px;width:1.0px;height:21.2px;background:#d9ecee;"></div>
<div class="t" style="top:366.64px;font-size:12px;color:#000;left:628.83px;transform:scaleX(1.1121);transform-origin:0 0;">Step</div>
<div class="t" style="top:366.64px;font-size:12px;color:#000;left:691.85px;transform:scaleX(1.0903);transform-origin:0 0;">Judgment</div>
<div class="t" style="top:366.64px;font-size:12px;color:#000;left:786.12px;transform:scaleX(1.0479);transform-origin:0 0;">Mode</div>
<div class="t" style="top:366.64px;font-size:12px;color:#000;left:846.08px;transform:scaleX(1.1110);transform-origin:0 0;">Polarity</div>
<div class="t" style="top:366.64px;font-size:12px;color:#000;left:909.31px;transform:scaleX(1.1469);transform-origin:0 0;">Voltage [kV]</div>
<div class="t" style="top:366.64px;font-size:12px;color:#000;left:1003.79px;transform:scaleX(1.1830);transform-origin:0 0;">Inj - Ret</div>
<div class="t" style="top:366.64px;font-size:12px;color:#000;left:1080.1px;transform:scaleX(1.0805);transform-origin:0 0;">Phase Angle [deg]</div>
<div class="t" style="top:366.64px;font-size:12px;color:#000;left:1188.82px;transform:scaleX(1.1287);transform-origin:0 0;">Comment</div>
<svg class="a" style="left:631.2px;top:389.5px;" width="13" height="13" viewBox="0 0 13 13"><rect x="0" y="0" width="12.6" height="12.6" rx="3" fill="#0b5ac6"/><path d="M3.2 6.6L5.4 8.6L9.5 4.2" fill="none" stroke="#fff" stroke-width="1.0" stroke-linecap="round" stroke-linejoin="round"/></svg>
<div class="t" style="top:389.62px;font-size:12.5px;color:#fff;left:649.6px;">1</div>
<div class="t" style="top:390.04px;font-size:12px;color:#fff;letter-spacing:0.8px;left:571.7px;width:300px;text-align:center;">------</div>
<div class="t" style="top:390.04px;font-size:12px;color:#fff;letter-spacing:0.1px;left:652.45px;width:300px;text-align:center;">NORMAL</div>
<div class="t" style="top:388.75px;font-size:14px;color:#fff;left:718.2px;width:300px;text-align:center;">+</div>
<div class="t" style="top:389.62px;font-size:12.5px;color:#fff;letter-spacing:0.2px;right:354.4px;">0.50</div>
<div class="t" style="top:390.04px;font-size:12px;color:#fff;letter-spacing:0.55px;left:878.68px;width:300px;text-align:center;">L  - N</div>
<div class="t" style="top:390.04px;font-size:12px;color:#fff;letter-spacing:0.8px;right:152.0px;">------</div>
<svg class="a" style="left:631.2px;top:411.5px;" width="13" height="13" viewBox="0 0 13 13"><rect x="0" y="0" width="12.6" height="12.6" rx="3" fill="#0b5ac6"/><path d="M3.2 6.6L5.4 8.6L9.5 4.2" fill="none" stroke="#fff" stroke-width="1.0" stroke-linecap="round" stroke-linejoin="round"/></svg>
<div class="t" style="top:411.59px;font-size:12.5px;color:#000;left:649.6px;">2</div>
<div class="t" style="top:412.01px;font-size:12px;color:#000;letter-spacing:0.8px;left:571.7px;width:300px;text-align:center;">------</div>
<div class="t" style="top:412.01px;font-size:12px;color:#000;letter-spacing:-0.15px;left:652.32px;width:300px;text-align:center;">COMMON</div>
<div class="t" style="top:410.72px;font-size:14px;color:#000;left:718.2px;width:300px;text-align:center;">+</div>
<div class="t" style="top:411.59px;font-size:12.5px;color:#000;letter-spacing:0.2px;right:354.4px;">0.50</div>
<div class="t" style="top:412.01px;font-size:12px;color:#000;letter-spacing:0.55px;left:878.68px;width:300px;text-align:center;">L  - PE</div>
<div class="t" style="top:412.01px;font-size:12px;color:#000;letter-spacing:0.8px;right:152.0px;">------</div>
<svg class="a" style="left:631.2px;top:433.4px;" width="13" height="13" viewBox="0 0 13 13"><rect x="0" y="0" width="12.6" height="12.6" rx="3" fill="#0b5ac6"/><path d="M3.2 6.6L5.4 8.6L9.5 4.2" fill="none" stroke="#fff" stroke-width="1.0" stroke-linecap="round" stroke-linejoin="round"/></svg>
<div class="t" style="top:433.56px;font-size:12.5px;color:#000;left:649.6px;">3</div>
<div class="t" style="top:433.98px;font-size:12px;color:#000;letter-spacing:0.8px;left:571.7px;width:300px;text-align:center;">------</div>
<div class="t" style="top:433.98px;font-size:12px;color:#000;letter-spacing:-0.15px;left:652.32px;width:300px;text-align:center;">COMMON</div>
<div class="t" style="top:432.69px;font-size:14px;color:#000;left:718.2px;width:300px;text-align:center;">+</div>
<div class="t" style="top:433.56px;font-size:12.5px;color:#000;letter-spacing:0.2px;right:354.4px;">0.50</div>
<div class="t" style="top:433.98px;font-size:12px;color:#000;letter-spacing:0.55px;left:878.68px;width:300px;text-align:center;">N  - PE</div>
<div class="t" style="top:433.98px;font-size:12px;color:#000;letter-spacing:0.8px;right:152.0px;">------</div>
</div></div>
</body></html>
